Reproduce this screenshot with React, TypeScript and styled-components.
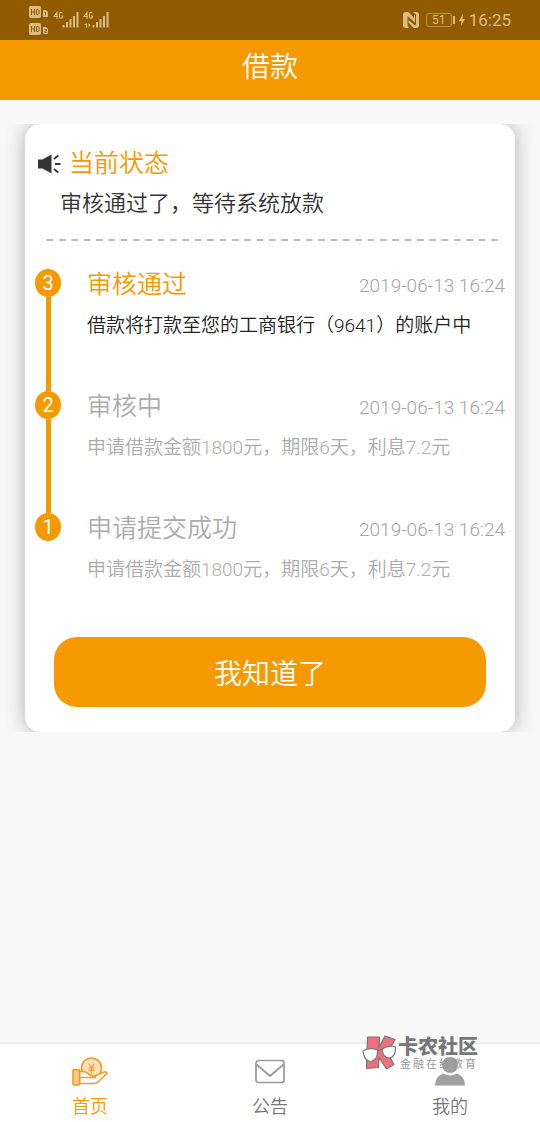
import React from 'react';
import styled, { createGlobalStyle } from 'styled-components';

const ORANGE = '#f59900';
const GREY = '#acacac';

const GlobalStyle = createGlobalStyle`
  * { box-sizing: border-box; }
  body {
    margin: 0;
    background: #f8f8f8;
    color: #333;
    font-family: Roboto, 'Noto Sans CJK SC', sans-serif;
    font-weight: 350;
  }
  h1, h2, h3, p, ol { margin: 0; padding: 0; font-weight: inherit; }
`;

const Page = styled.div`
  display: flex;
  flex-direction: column;
  min-height: 100vh;
`;

const StatusBar = styled.div`
  display: flex;
  align-items: center;
  justify-content: space-between;
  height: 40px;
  padding: 0 29px 0 28px;
  background: #915c00;
  color: #dbbb88;
  font-weight: 400;
`;

const StatusGroup = styled.div`
  display: flex;
  align-items: center;
  gap: 4px;
`;

const Clock = styled.time`
  font-size: 17px;
  line-height: 20px;
`;

const Battery = styled.span`
  display: flex;
  align-items: center;
  gap: 1px;
  margin-left: 3px;
  &::after {
    content: '';
    width: 2px;
    height: 8px;
    background: currentColor;
  }
`;

const BatteryLevel = styled.span`
  width: 26px;
  height: 14px;
  border: 1px solid #b99253;
  border-radius: 3px;
  font-size: 12px;
  line-height: 12px;
  text-align: center;
`;

const TitleBar = styled.header`
  height: 60px;
  background: ${ORANGE};
  color: #fff;
  text-align: center;
`;

const PageTitle = styled.h1`
  font-size: 28px;
  line-height: 56px;
`;

const Main = styled.main`
  flex: 1;
  padding: 24px 0;
`;

const CardClip = styled.div`
  overflow: hidden;
  padding: 0 25px;
`;

const Card = styled.section`
  padding: 21px 10px 25px;
  border-radius: 15px;
  background: #fff;
  box-shadow: 0 0 20px rgba(0, 0, 0, 0.3);
`;

const StateTitle = styled.div`
  display: flex;
  align-items: center;
  gap: 6px;
  padding-left: 2px;
  color: ${ORANGE};
`;

const Heading = styled.h2`
  font-size: 25px;
  line-height: 38px;
`;

const StateText = styled.p`
  padding-left: 25px;
  font-size: 22px;
  line-height: 42px;
`;

const Divider = styled.hr`
  height: 2px;
  margin: 14px 7px 28px 6px;
  border: 0;
  background: linear-gradient(90deg, transparent 50%, #bbb 50%) 0 0 / calc(100% / 37) 2px;
`;

const Timeline = styled.ol`
  list-style: none;
`;

const Step = styled.li`
  display: flex;
  gap: 26px;
  min-height: 122px;
`;

const Rail = styled.div<{ $last: boolean }>`
  display: flex;
  flex-direction: column;
  align-items: center;
  &::after {
    content: '';
    flex: 1;
    width: 5px;
    background: ${(p) => (p.$last ? 'transparent' : ORANGE)};
  }
`;

const Badge = styled.span`
  width: 26px;
  height: 28px;
  border-radius: 50%;
  background: ${ORANGE};
  color: #fff;
  font-size: 20px;
  font-weight: 400;
  line-height: 28px;
  text-align: center;
`;

const StepBody = styled.div`
  flex: 1;
`;

const StepHead = styled.div`
  display: flex;
  align-items: center;
  justify-content: space-between;
`;

const StepTitle = styled.h3<{ $active: boolean }>`
  color: ${(p) => (p.$active ? ORANGE : GREY)};
  font-size: 25px;
  line-height: 30px;
`;

const StepTime = styled.time`
  padding-top: 2px;
  color: #a4a4a4;
  font-size: 19px;
  line-height: 30px;
`;

const StepText = styled.p<{ $active: boolean }>`
  margin-top: 11px;
  color: ${(p) => (p.$active ? '#222' : GREY)};
  font-size: 19px;
  line-height: 28px;
`;

const ConfirmButton = styled.button`
  display: block;
  width: calc(100% - 38px);
  height: 70px;
  margin: 2px 19px 0;
  padding: 0;
  border: 0;
  border-radius: 23px;
  background: ${ORANGE};
  color: #fff;
  font: inherit;
  font-size: 28px;
`;

const TabBar = styled.nav`
  position: relative;
  display: flex;
  height: 80px;
  border-top: 2px solid #eee;
  background: #fff;
`;

const Tab = styled.a<{ $active?: boolean }>`
  flex: 1;
  display: flex;
  flex-direction: column;
  align-items: center;
  gap: 6px;
  padding-top: 13px;
  color: ${(p) => (p.$active ? ORANGE : '#777')};
  font-size: 18px;
  line-height: 28px;
  text-decoration: none;
`;

const Watermark = styled.div`
  position: absolute;
  right: 62px;
  top: -9px;
  display: flex;
  gap: 2px;
  color: #777;
`;

const Brand = styled.div`
  font-size: 20px;
  font-weight: 900;
  line-height: 24px;
`;

const Slogan = styled.div`
  padding-left: 2px;
  font-size: 11px;
  font-weight: 400;
  line-height: 12px;
  letter-spacing: 2px;
  color: #999;
`;

const SimIcon = () => (
  <svg width="84" height="32" viewBox="0 0 84 32" fill="currentColor" aria-hidden="true">
    {[2, 19].map((y, i) => (
      <g key={y}>
        <rect x="1" y={y} width="12" height="12" rx="2" />
        <path
          d={`M3.500 ${y + 3}v6M6.500 ${y + 3}v6M3.500 ${y + 6}h3M8.500 ${y + 3.500}v5h1q1.500 0 1.500-1.500v-2q0-1.500-1.500-1.500z`}
          fill="none"
          stroke="#915c00"
          strokeWidth="1"
        />
        <path d={`M15 ${y + 4}h3l2 2v5h-5z`} />
        <path
          d={i === 0 ? `M16.500 ${y + 6.500}h1v3` : `M16.500 ${y + 6.500}h2v1.500h-1.500v1.500h2`}
          fill="none"
          stroke="#915c00"
          strokeWidth="0.900"
        />
      </g>
    ))}
    {[0, 30].map((x) => (
      <g key={x}>
        <path
          d={`M${x + 29} 15V8.500l-3 4h4M${x + 34.500} 9.500q-.5-1.200-1.500-1.200q-1.500 0-1.500 1.700v2.500q0 1.700 1.500 1.700q1.700 0 1.700-2.200h-1.500`}
          fill="none"
          stroke="currentColor"
          strokeWidth="1.100"
        />
        <rect x={x + 34.500} y="21" width="2" height="2.500" />
        <rect x={x + 38} y="18" width="2" height="5.500" />
        <rect x={x + 41.500} y="15" width="2" height="8.500" />
        <rect x={x + 45} y="12" width="2" height="11.500" />
        <rect x={x + 48.500} y="8" width="2" height="15.500" />
      </g>
    ))}
    <path d="M56 21l3-2v4.500h-1.200V21zM60.500 19l2 2.200-2 2.200z" />
  </svg>
);

const NfcIcon = () => (
  <svg width="16" height="16" viewBox="0 0 16 16" fill="currentColor" aria-hidden="true">
    <path d="M3 0h2.500L11 6V3h1v7.500L4.500 4v9.500L6 16H3q-3 0-3-3V3q0-3 3-3z" />
    <path d="M10 0h3q3 0 3 3v10q0 3-3 3h-2.500L5.500 10.500V8l6.500 5.500 1-1V2.500z" />
  </svg>
);

const BoltIcon = () => (
  <svg width="6" height="14" viewBox="0 0 6 14" fill="currentColor" aria-hidden="true">
    <path d="M4 1L0 8h2.500L1.800 13 6 6H3.500z" />
  </svg>
);

const SpeakerIcon = () => (
  <svg width="26" height="22" viewBox="0 0 26 22" aria-hidden="true">
    <path d="M1 6.500h4.500L14.500 1.500v19L5.500 15.500H1z" fill="#333" />
    <path d="M17 6l4.300-3.500M18 11h5.500M17 16l4.300 3.500" stroke="#333" strokeWidth="1.800" fill="none" />
  </svg>
);

const LoanIcon = () => (
  <svg width="36" height="30" viewBox="0 0 36 30" fill="none" stroke="#eb9d27" strokeWidth="1.600" strokeLinejoin="round" strokeLinecap="round" aria-hidden="true">
    <circle cx="19.500" cy="11" r="10" fill="#fbe3bf" />
    <path d="M17 7l2.500 3.500L22 7M19.500 10.500v5.500M17 11h5M17 13.300h5" strokeWidth="1.200" />
    <path d="M7.500 14.500h4q2.500 0 4.500 2.300l5.500 2.700 6-2.500 4.500-2q3-.5 3 1.500l-8.500 8q-2 2-4.500 2H7.500z" fill="#fff" />
    <path d="M7.500 20.500h13.500q3 .5 3-1.500" />
    <rect x="1" y="12.500" width="6.500" height="15.500" rx="1" fill="#f8cb85" />
  </svg>
);

const MailIcon = () => (
  <svg width="36" height="30" viewBox="0 0 36 30" fill="none" stroke="#999" strokeWidth="1.700" strokeLinejoin="round" aria-hidden="true">
    <rect x="4" y="3.500" width="28" height="22" rx="2.500" />
    <path d="M4.500 7.500L18 19 31.500 7.500" />
  </svg>
);

const UserIcon = () => (
  <svg width="36" height="30" viewBox="0 0 36 30" fill="#a0a0a0" aria-hidden="true">
    <circle cx="18" cy="8" r="8" />
    <path d="M3 28.500q0-9 8-12 7 4 14 0 8 3 8 12z" />
  </svg>
);

const BrandIcon = () => (
  <svg width="34" height="36" viewBox="0 0 34 36" stroke="#777" strokeWidth="1.200" strokeLinejoin="round" aria-hidden="true">
    <path d="M5.500 2h12l-.5 10.500L23 1l10 3.500L25.500 18 32 29.500 24.500 34 17 22.500 16.500 32.500 4.500 33.500z" fill="#ee707b" />
    <path d="M1 16q7-4 14.500-1 .5 10-6.500 11.500Q2 26 1 16zM20 14q7-4.500 13.500-2 .5 9-5.500 11-7 .5-8-9z" fill="#fff" />
    <path d="M15.500 16q2-2 4.500-1.500" fill="none" />
  </svg>
);

interface StepData {
  no: number;
  title: string;
  time: string;
  text: string;
}

const steps: StepData[] = [
  { no: 3, title: '审核通过', time: '2019-06-13 16:24', text: '借款将打款至您的工商银行（9641）的账户中' },
  { no: 2, title: '审核中', time: '2019-06-13 16:24', text: '申请借款金额1800元，期限6天，利息7.2元' },
  { no: 1, title: '申请提交成功', time: '2019-06-13 16:24', text: '申请借款金额1800元，期限6天，利息7.2元' },
];

export default function App() {
  return (
    <Page lang="zh-CN">
      <GlobalStyle />
      <StatusBar>
        <SimIcon />
        <StatusGroup>
          <NfcIcon />
          <Battery>
            <BatteryLevel>51</BatteryLevel>
          </Battery>
          <BoltIcon />
          <Clock>16:25</Clock>
        </StatusGroup>
      </StatusBar>
      <TitleBar>
        <PageTitle>借款</PageTitle>
      </TitleBar>
      <Main>
        <CardClip>
          <Card>
            <StateTitle>
              <SpeakerIcon />
              <Heading>当前状态</Heading>
            </StateTitle>
            <StateText>审核通过了，等待系统放款</StateText>
            <Divider />
            <Timeline>
              {steps.map((s, i) => (
                <Step key={s.no}>
                  <Rail $last={i === steps.length - 1}>
                    <Badge>{s.no}</Badge>
                  </Rail>
                  <StepBody>
                    <StepHead>
                      <StepTitle $active={i === 0}>{s.title}</StepTitle>
                      <StepTime>{s.time}</StepTime>
                    </StepHead>
                    <StepText $active={i === 0}>{s.text}</StepText>
                  </StepBody>
                </Step>
              ))}
            </Timeline>
            <ConfirmButton type="button">我知道了</ConfirmButton>
          </Card>
        </CardClip>
      </Main>
      <TabBar>
        <Tab href="#home" $active>
          <LoanIcon />
          首页
        </Tab>
        <Tab href="#notice">
          <MailIcon />
          公告
        </Tab>
        <Tab href="#mine">
          <UserIcon />
          我的
        </Tab>
        <Watermark>
          <BrandIcon />
          <div>
            <Brand>卡农社区</Brand>
            <Slogan>金融在线教育</Slogan>
          </div>
        </Watermark>
      </TabBar>
    </Page>
  );
}
